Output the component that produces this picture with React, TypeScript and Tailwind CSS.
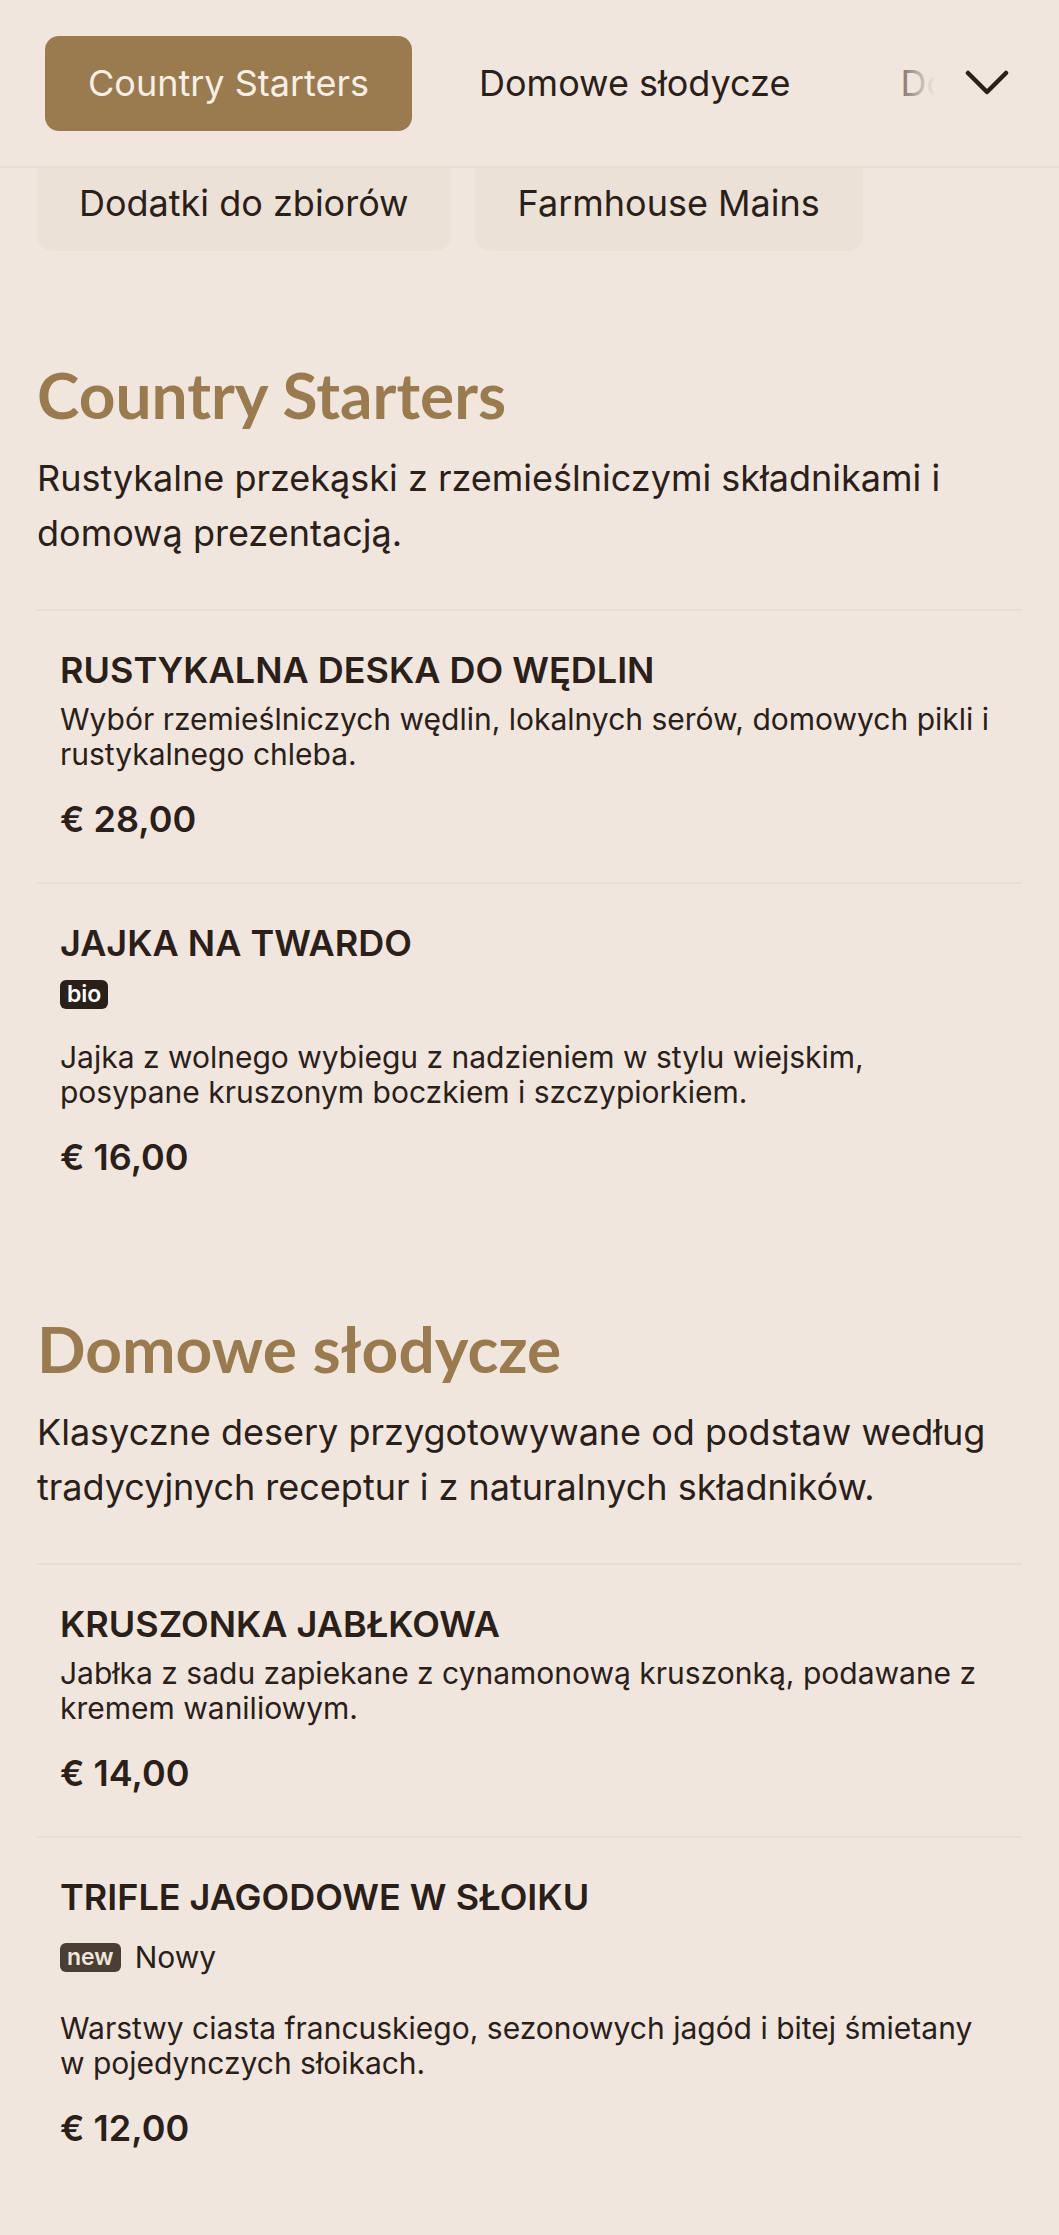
type Item = {
  name: string;
  desc: string;
  price: string;
  tag?: string;
  tagLabel?: string;
  tagTone?: 'dark' | 'soft';
};

type Section = {
  title: string;
  desc: string;
  items: Item[];
};

const sections: Section[] = [
  {
    title: 'Country Starters',
    desc: 'Rustykalne przekąski z rzemieślniczymi składnikami i domową prezentacją.',
    items: [
      {
        name: 'RUSTYKALNA DESKA DO WĘDLIN',
        desc: 'Wybór rzemieślniczych wędlin, lokalnych serów, domowych pikli i rustykalnego chleba.',
        price: '€ 28,00',
      },
      {
        name: 'JAJKA NA TWARDO',
        tag: 'bio',
        tagTone: 'dark',
        desc: 'Jajka z wolnego wybiegu z nadzieniem w stylu wiejskim, posypane kruszonym boczkiem i szczypiorkiem.',
        price: '€ 16,00',
      },
    ],
  },
  {
    title: 'Domowe słodycze',
    desc: 'Klasyczne desery przygotowywane od podstaw według tradycyjnych receptur i z naturalnych składników.',
    items: [
      {
        name: 'KRUSZONKA JABŁKOWA',
        desc: 'Jabłka z sadu zapiekane z cynamonową kruszonką, podawane z kremem waniliowym.',
        price: '€ 14,00',
      },
      {
        name: 'TRIFLE JAGODOWE W SŁOIKU',
        tag: 'new',
        tagLabel: 'Nowy',
        tagTone: 'soft',
        desc: 'Warstwy ciasta francuskiego, sezonowych jagód i bitej śmietany w pojedynczych słoikach.',
        price: '€ 12,00',
      },
    ],
  },
];

const tabs = ['Country Starters', 'Domowe słodycze', 'Dodatki do zbiorów'];

function MenuItem({ item, last }: { item: Item; last: boolean }) {
  return (
    <div className={`pl-[23px] pt-[39px] pb-[43px] ${last ? '' : 'border-b-2 border-[#e8ded2]'}`}>
      <h3 className="text-[36px] leading-[40px] font-semibold text-[#2a2019]">{item.name}</h3>
      {item.tag && (
        <div className="mt-[17px] flex items-center gap-[14px]">
          <span
            className={`rounded-[6px] px-[7px] text-[23px] leading-[29px] font-semibold ${
              item.tagTone === 'dark' ? 'bg-[#2a2019] text-white' : 'bg-[#4b3f35] text-[#f0e6dd]'
            }`}
          >
            {item.tag}
          </span>
          {item.tagLabel && (
            <span className="text-[30px] leading-[46px] text-[#2a2019]">{item.tagLabel}</span>
          )}
        </div>
      )}
      <p
        className={`${item.tag ? 'mt-[31px]' : 'mt-[12px]'} max-w-[934px] text-[30px] leading-[35px] text-[#2a2019]`}
      >
        {item.desc}
      </p>
      <div className="mt-[27px] text-[36px] leading-[40px] font-semibold text-[#2a2019]">
        {item.price}
      </div>
    </div>
  );
}

export default function App() {
  return (
    <div className="min-h-[2235px] w-full bg-[#f0e6dd] font-['Inter','Noto_Sans',sans-serif] text-[#2a2019]">
      {/* top nav */}
      <div className="flex h-[168px] items-center border-b-2 border-[#e8ded3]">
        <div className="relative flex-1 overflow-hidden pl-[45px]">
          <div className="flex gap-[24px] whitespace-nowrap">
            {tabs.map((t, i) => (
              <button
                key={t}
                className={`h-[95px] shrink-0 rounded-[14px] px-[43px] text-[36px] ${
                  i === 0 ? 'bg-[#9a7b50] text-[#f7efe6]' : 'text-[#2a2019]'
                }`}
              >
                {t}
              </button>
            ))}
          </div>
          <div className="pointer-events-none absolute inset-y-0 right-0 w-[60px] bg-gradient-to-r from-[#f0e6dd]/0 to-[#f0e6dd]" />
        </div>
        <button className="flex w-[124px] items-center justify-center pr-[20px] text-[#2a2019]">
          <svg width="44" height="26" viewBox="0 0 44 26" fill="none">
            <polyline
              points="3,3 22,22 41,3"
              stroke="currentColor"
              strokeWidth="4.5"
              strokeLinecap="round"
              strokeLinejoin="round"
            />
          </svg>
        </button>
      </div>

      {/* second row of tabs peeking below */}
      <div className="flex gap-[24px] px-[37px]">
        <div className="flex h-[83px] items-center rounded-b-[16px] bg-[#ebe1d6] px-[42px] pb-[14px] text-[36px]">
          Dodatki do zbiorów
        </div>
        <div className="flex h-[83px] items-center rounded-b-[16px] bg-[#ebe1d6] px-[43px] pb-[14px] text-[36px]">
          Farmhouse Mains
        </div>
      </div>

      <div className="px-[37px] pb-[80px]">
        {sections.map((s, si) => (
          <section key={s.title} className={si === 0 ? 'pt-[105px]' : 'pt-[90px]'}>
            <h2 className="font-['Lato',sans-serif] text-[64px] leading-[77px] font-bold text-[#9a7b50]">
              {s.title}
            </h2>
            <p className="mt-[18px] text-[36px] leading-[55px] text-[#2a2019]">{s.desc}</p>
            <div className="mt-[48px] border-t-2 border-[#e8ded2]">
              {s.items.map((it, ii) => (
                <MenuItem key={it.name} item={it} last={ii === s.items.length - 1} />
              ))}
            </div>
          </section>
        ))}
      </div>
    </div>
  );
}
